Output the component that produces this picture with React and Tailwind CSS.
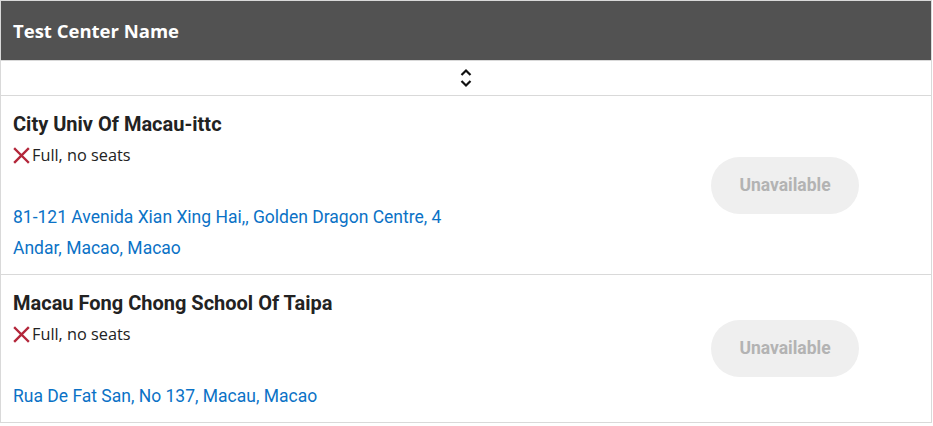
import React from "react";

const rows = [
  {
    name: "City Univ Of Macau-ittc",
    address: "81-121 Avenida Xian Xing Hai,, Golden Dragon Centre, 4 Andar, Macao, Macao",
  },
  {
    name: "Macau Fong Chong School Of Taipa",
    address: "Rua De Fat San, No 137, Macau, Macao",
  },
];

function XIcon() {
  return (
    <svg width="17" height="17" viewBox="0 0 17 17" className="shrink-0">
      <path d="M2 2 L15 15 M15 2 L2 15" stroke="#b3263a" strokeWidth="2.4" strokeLinecap="square" />
    </svg>
  );
}

function SortIcon() {
  return (
    <svg width="12" height="20" viewBox="0 0 12 20">
      <path d="M1.5 7 L6 2.5 L10.5 7" stroke="#111" strokeWidth="2.2" fill="none" />
      <path d="M1.5 13 L6 17.5 L10.5 13" stroke="#111" strokeWidth="2.2" fill="none" />
    </svg>
  );
}

export default function App() {
  return (
    <div className="w-[933px] h-[426px] bg-white">
      <div className="w-[932px] border border-[#d9d9d9] bg-white">
        <div className="h-[59px] bg-[#525252] flex items-center px-[12px]">
          <span className="text-white text-[18.5px] font-bold" style={{ fontFamily: '"Open Sans", sans-serif' }}>
            Test Center Name
          </span>
        </div>
        <div className="h-[35px] border-t border-[#d9d9d9] flex items-center justify-center">
          <SortIcon />
        </div>
        {rows.map((r, i) => (
          <div key={i} className="flex items-center border-t border-[#d9d9d9]">
            <div className="w-[470px] pl-[12px] pt-[15px] pb-[10px]">
              <div className="text-[20px] leading-[27px] font-bold text-[#222]" style={{ fontFamily: "Roboto, sans-serif" }}>
                {r.name}
              </div>
              <div className="mt-[5px] flex items-center gap-[2px] text-[16.3px] leading-[24px] text-[#222]" style={{ fontFamily: '"Open Sans", sans-serif' }}>
                <XIcon />
                <span>Full, no seats</span>
              </div>
              <div className="mt-[35px] text-[17.5px] leading-[31px] text-[#0b72c6] pr-[10px]" style={{ fontFamily: "Roboto, sans-serif" }}>
                {r.address}
              </div>
            </div>
            <div className="flex-1 flex justify-end pr-[72px]">
              <div className="w-[148px] h-[57px] rounded-full bg-[#efefef] flex items-center justify-center text-[17.5px] font-bold text-[#b3b3b3]" style={{ fontFamily: "Roboto, sans-serif" }}>
                Unavailable
              </div>
            </div>
          </div>
        ))}
      </div>
    </div>
  );
}
